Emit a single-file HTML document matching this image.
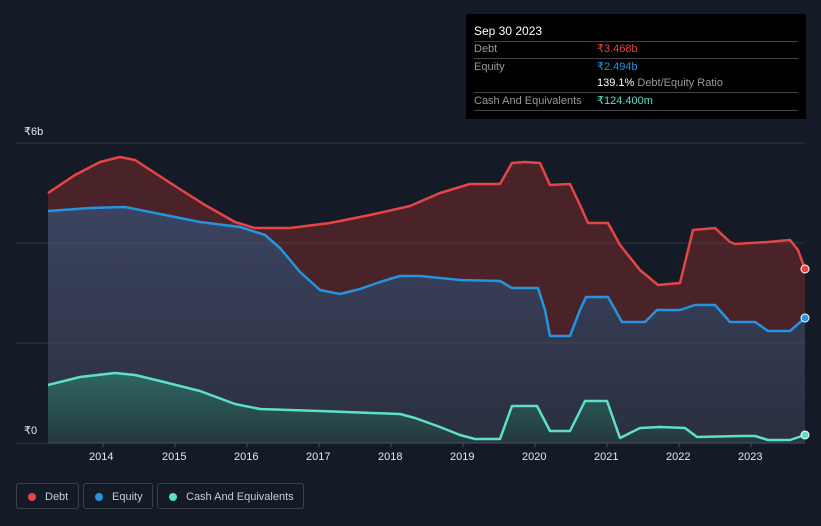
<!DOCTYPE html>
<html><head><meta charset="utf-8"><style>
body{margin:0;background:#151b26;font-family:"Liberation Sans",sans-serif;}
.wrap{position:relative;width:821px;height:526px;overflow:hidden;background:#151b26}
.tip{position:absolute;left:466px;top:14px;width:340px;height:105px;background:#000;color:#fff;font-size:11px}
.tip .r{position:absolute;left:8px;right:8px;border-bottom:1px solid #444;height:17px;line-height:17px}
.tip .l{color:#999}
.tip .v{position:absolute;left:123px;top:0}
.leg{position:absolute;top:483px;height:26px;border:1px solid #3a404c;border-radius:3px;color:#c8ccd2;font-size:11px;line-height:26px;box-sizing:border-box}
.leg i{position:absolute;left:11px;top:9px;width:8px;height:8px;border-radius:50%}
.ax{position:absolute;top:451px;color:#e6e8ea;font-size:11px}
</style></head><body><div class="wrap">
<svg width="821" height="526" style="position:absolute;left:0;top:0">
<defs><linearGradient id="cg" x1="0" y1="0" x2="0" y2="1"><stop offset="0" stop-color="#2f6662"/><stop offset="1" stop-color="#24393d"/></linearGradient>
<linearGradient id="eg" x1="0" y1="0" x2="0" y2="1"><stop offset="0" stop-color="#3c4360"/><stop offset="1" stop-color="#2a3040"/></linearGradient></defs>
<line x1="16" y1="143" x2="805" y2="143" stroke="#2f3542"/>
<path d="M48,193 L75,175 L100,162 L120,157 L135,160 L175,186 L205,205 L235,222 L255,228 L290,228 L330,223 L370,215 L410,206 L440,193 L470,184 L500,184 L512,163 L525,162 L540,163 L550,185 L570,184 L580,205 L588,223 L608,223 L620,245 L640,270 L658,285 L680,283 L693,230 L715,228 L730,242 L735,244 L768,242 L790,240 L798,250 L805,269 L805,443 L48,443Z" fill="#4a2329"/>
<path d="M48,211 L90,208 L125,207 L160,214 L200,222 L240,227 L265,235 L280,248 L300,272 L320,290 L340,294 L360,289 L380,282 L400,276 L420,276 L460,280 L500,281 L512,288 L538,288 L545,310 L550,336 L570,336 L580,310 L586,297 L608,297 L622,322 L645,322 L657,310 L680,310 L695,305 L715,305 L730,322 L755,322 L768,331 L790,331 L805,318 L805,443 L48,443Z" fill="url(#eg)"/>
<line x1="16" y1="243" x2="805" y2="243" stroke="#4a4f5e" stroke-opacity=".5"/>
<line x1="16" y1="343" x2="805" y2="343" stroke="#4a4f5e" stroke-opacity=".5"/>
<path d="M48,385 L80,377 L115,373 L135,375 L160,381 L200,391 L235,404 L260,409 L320,411 L400,414 L415,418 L440,427 L460,435 L475,439 L500,439 L512,406 L537,406 L550,431 L570,431 L585,401 L607,401 L620,438 L640,428 L660,427 L685,428 L697,437 L740,436 L755,436 L768,440 L790,440 L805,435 L805,443 L48,443Z" fill="url(#cg)"/>
<line x1="16" y1="443" x2="805" y2="443" stroke="#4a4f5e"/>
<g fill="none" stroke-width="2.5" stroke-linejoin="round">
<path d="M48,193 L75,175 L100,162 L120,157 L135,160 L175,186 L205,205 L235,222 L255,228 L290,228 L330,223 L370,215 L410,206 L440,193 L470,184 L500,184 L512,163 L525,162 L540,163 L550,185 L570,184 L580,205 L588,223 L608,223 L620,245 L640,270 L658,285 L680,283 L693,230 L715,228 L730,242 L735,244 L768,242 L790,240 L798,250 L805,269" stroke="#e64545"/>
<path d="M48,211 L90,208 L125,207 L160,214 L200,222 L240,227 L265,235 L280,248 L300,272 L320,290 L340,294 L360,289 L380,282 L400,276 L420,276 L460,280 L500,281 L512,288 L538,288 L545,310 L550,336 L570,336 L580,310 L586,297 L608,297 L622,322 L645,322 L657,310 L680,310 L695,305 L715,305 L730,322 L755,322 L768,331 L790,331 L805,318" stroke="#2394df"/>
<path d="M48,385 L80,377 L115,373 L135,375 L160,381 L200,391 L235,404 L260,409 L320,411 L400,414 L415,418 L440,427 L460,435 L475,439 L500,439 L512,406 L537,406 L550,431 L570,431 L585,401 L607,401 L620,438 L640,428 L660,427 L685,428 L697,437 L740,436 L755,436 L768,440 L790,440 L805,435" stroke="#5ee0c8"/>
</g>
<circle cx="805" cy="269" r="4" fill="#e64545" stroke="#fff" stroke-width="1"/>
<circle cx="805" cy="318" r="4" fill="#2394df" stroke="#fff" stroke-width="1"/>
<circle cx="805" cy="435" r="4" fill="#5ee0c8" stroke="#fff" stroke-width="1"/>
<g stroke="#4a4f5e"><line x1="103" y1="443" x2="103" y2="447"/><line x1="175" y1="443" x2="175" y2="447"/><line x1="247" y1="443" x2="247" y2="447"/><line x1="319" y1="443" x2="319" y2="447"/><line x1="391" y1="443" x2="391" y2="447"/><line x1="463" y1="443" x2="463" y2="447"/><line x1="535" y1="443" x2="535" y2="447"/><line x1="607" y1="443" x2="607" y2="447"/><line x1="679" y1="443" x2="679" y2="447"/><line x1="751" y1="443" x2="751" y2="447"/></g>
</svg>
<div style="position:absolute;left:24px;top:125px;color:#e6e8ea;font-size:11px">₹6b</div>
<div style="position:absolute;left:16px;top:424px;width:32px;height:19px;background:#151b26;color:#e6e8ea;font-size:11px;line-height:15px;padding-left:8px;box-sizing:border-box">₹0</div>
<div class="ax" style="left:89px">2014</div><div class="ax" style="left:162px">2015</div><div class="ax" style="left:234px">2016</div><div class="ax" style="left:306px">2017</div><div class="ax" style="left:378px">2018</div><div class="ax" style="left:450px">2019</div><div class="ax" style="left:522px">2020</div><div class="ax" style="left:594px">2021</div><div class="ax" style="left:666px">2022</div><div class="ax" style="left:738px">2023</div>
<div class="tip">
<div style="position:absolute;left:8px;right:8px;top:0;height:27px;border-bottom:1px solid #444"><span style="position:absolute;top:10px;font-size:12px">Sep 30 2023</span></div>
<div class="r" style="top:27px"><span class="l">Debt</span><span class="v" style="color:#e64545">₹3.468b</span></div>
<div class="r" style="top:45px;border:none"><span class="l">Equity</span><span class="v" style="color:#2394df">₹2.494b</span></div>
<div class="r" style="top:61px"><span class="v"><b style="font-weight:normal;color:#fff">139.1%</b> <span class="l">Debt/Equity Ratio</span></span></div>
<div class="r" style="top:79px"><span class="l">Cash And Equivalents</span><span class="v" style="color:#5ee0c8">₹124.400m</span></div>
</div>
<div class="leg" style="left:16px;width:63px"><i style="background:#e64545"></i><span style="margin-left:28px">Debt</span></div>
<div class="leg" style="left:83px;width:70px"><i style="background:#2394df"></i><span style="margin-left:28px">Equity</span></div>
<div class="leg" style="left:157px;width:147px"><i style="background:#5ee0c8"></i><span style="margin-left:28px">Cash And Equivalents</span></div>
</div></body></html>
